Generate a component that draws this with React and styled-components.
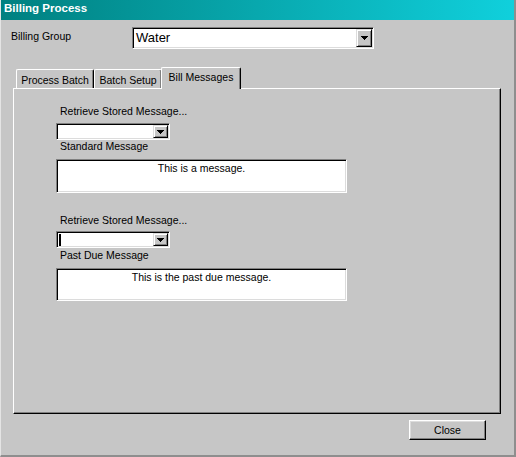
import React from "react";
import styled, { createGlobalStyle } from "styled-components";

const Global = createGlobalStyle`
  html, body { margin: 0; padding: 0; background: #c6c6c6; }
  * { box-sizing: border-box; }
`;

const Window = styled.div`
  width: 516px;
  height: 457px;
  background: #c6c6c6;
  border-left: 1px solid #e4e4e4;
  border-right: 2px solid #8e8e8e;
  border-bottom: 2px solid #8e8e8e;
  display: flex;
  flex-direction: column;
  font-family: "Liberation Sans", Arial, sans-serif;
  font-size: 10.5px;
  color: #000;
  overflow: hidden;
`;

const TitleBar = styled.div`
  height: 20px;
  flex: none;
  background: linear-gradient(to right, #008080, #10d0dc);
  color: #fff;
  font-weight: bold;
  font-size: 11.5px;
  line-height: 17px;
  padding-left: 3px;
`;

const GroupRow = styled.div`
  display: flex;
  align-items: flex-start;
  margin-top: 7px;
  padding-left: 10px;
`;

const FieldLabel = styled.div`
  width: 121px;
  line-height: 13px;
  margin-top: 3px;
`;

const Sunken = styled.div`
  display: flex;
  align-items: stretch;
  background: #fff;
  border: 1px solid;
  border-color: #808080 #ffffff #ffffff #808080;
  box-shadow: inset 1px 1px #000, inset -1px -1px #dcdcdc;
`;

const Combo = styled(Sunken)`
  width: ${(p) => p.$w}px;
  height: ${(p) => p.$h}px;
  padding: 1px;
`;

const ComboValue = styled.div`
  flex: 1;
  font-size: ${(p) => p.$size || 10.5}px;
  line-height: ${(p) => p.$lh || 13}px;
  padding-left: 2px;
  display: flex;
  align-items: center;
`;

const Caret = styled.span`
  display: block;
  width: 2px;
  height: 12px;
  background: #000;
  margin-left: -1px;
`;

const DropButton = styled.div`
  width: ${(p) => p.$w}px;
  flex: none;
  background: #c6c6c6;
  border: 1px solid;
  border-color: #dcdcdc #000 #000 #dcdcdc;
  box-shadow: inset 1px 1px #fff, inset -1px -1px #808080;
  display: flex;
  align-items: center;
  justify-content: center;
`;

const Arrow = () => (
  <svg width="7" height="4" viewBox="0 0 7 4" shapeRendering="crispEdges">
    <rect x="0" y="0" width="7" height="1" fill="#000" />
    <rect x="1" y="1" width="5" height="1" fill="#000" />
    <rect x="2" y="2" width="3" height="1" fill="#000" />
    <rect x="3" y="3" width="1" height="1" fill="#000" />
  </svg>
);

const TabStrip = styled.div`
  display: flex;
  align-items: flex-end;
  margin-top: 18px;
  margin-left: 12px;
  padding-left: 3px;
  height: 21px;
  flex: none;
`;

const Tab = styled.div`
  position: relative;
  width: ${(p) => p.$w}px;
  height: ${(p) => (p.$active ? 22 : 19)}px;
  margin-bottom: ${(p) => (p.$active ? -1 : 0)}px;
  margin-left: ${(p) => (p.$active ? -1 : 0)}px;
  padding-top: ${(p) => (p.$active ? 3 : 4)}px;
  text-align: center;
  line-height: 13px;
  background: #c6c6c6;
  border-top: 1px solid #fff;
  border-left: 1px solid #fff;
  border-right: 1px solid #000;
  border-top-left-radius: 2px;
  border-top-right-radius: 2px;
  box-shadow: inset -1px 0 #808080;
  z-index: ${(p) => (p.$active ? 2 : 1)};
  white-space: nowrap;
`;

const Panel = styled.div`
  margin-left: 12px;
  width: 488px;
  height: 326px;
  flex: none;
  border: 1px solid;
  border-color: #fff #000 #000 #fff;
  box-shadow: inset -1px -1px #808080;
  padding: 16px 0 0 42px;
  display: flex;
  flex-direction: column;
  align-items: flex-start;
`;

const Label = styled.div`
  line-height: 13px;
  margin-left: 4px;
  margin-top: ${(p) => p.$mt || 0}px;
`;

const Spaced = styled.div`
  margin-top: ${(p) => p.$mt || 0}px;
`;

const MessageBox = styled(Sunken)`
  width: 291px;
  height: ${(p) => p.$h}px;
  padding: 2px;
  justify-content: center;
  align-items: flex-start;
  line-height: 12px;
`;

const Footer = styled.div`
  display: flex;
  justify-content: flex-end;
  padding-right: 28px;
  margin-top: 6px;
`;

const Button = styled.div`
  width: 77px;
  height: 20px;
  background: #c6c6c6;
  border: 1px solid;
  border-color: #fff #000 #000 #fff;
  box-shadow: inset -1px -1px #808080, inset 1px 1px #dcdcdc;
  display: flex;
  align-items: center;
  justify-content: center;
  line-height: 13px;
`;

function SmallCombo({ caret }) {
  return (
    <Combo $w={114} $h={17}>
      <ComboValue>{caret && <Caret />}</ComboValue>
      <DropButton $w={15}>
        <Arrow />
      </DropButton>
    </Combo>
  );
}

export default function App() {
  return (
    <>
      <Global />
      <Window>
        <TitleBar>Billing Process</TitleBar>
        <GroupRow>
          <FieldLabel>Billing Group</FieldLabel>
          <Combo $w={242} $h={22}>
            <ComboValue $size={13} $lh={18}>Water</ComboValue>
            <DropButton $w={16}>
              <Arrow />
            </DropButton>
          </Combo>
        </GroupRow>
        <TabStrip>
          <Tab $w={78}>Process Batch</Tab>
          <Tab $w={68}>Batch Setup</Tab>
          <Tab $w={80} $active>Bill Messages</Tab>
        </TabStrip>
        <Panel>
          <Label>Retrieve Stored Message...</Label>
          <Spaced $mt={5}>
            <SmallCombo />
          </Spaced>
          <Label>Standard Message</Label>
          <Spaced $mt={6}>
            <MessageBox $h={34}>This is a message.</MessageBox>
          </Spaced>
          <Label $mt={21}>Retrieve Stored Message...</Label>
          <Spaced $mt={4}>
            <SmallCombo caret />
          </Spaced>
          <Label $mt={1}>Past Due Message</Label>
          <Spaced $mt={6}>
            <MessageBox $h={33}>This is the past due message.</MessageBox>
          </Spaced>
        </Panel>
        <Footer>
          <Button>Close</Button>
        </Footer>
      </Window>
    </>
  );
}
